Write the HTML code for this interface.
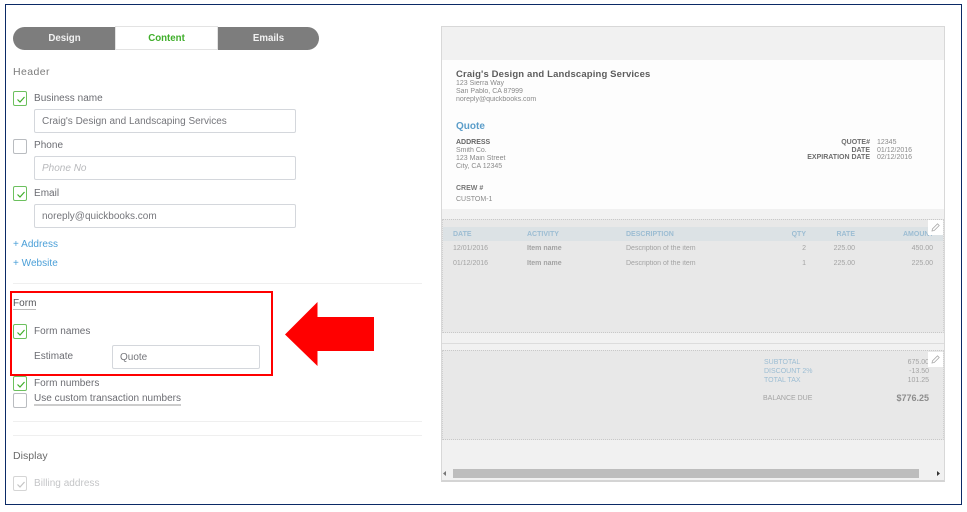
<!DOCTYPE html>
<html><head><meta charset="utf-8"><style>
html,body{margin:0;padding:0;background:#fff}
#p{position:relative;width:967px;height:512px;overflow:hidden;background:#fff;font-family:"Liberation Sans",sans-serif}
#p div{position:absolute;box-sizing:border-box;white-space:nowrap}
.l{font-size:10px;color:#6b6c72;line-height:14px;letter-spacing:.03px;filter:blur(.3px)}
.cb{left:13px;width:14px;height:15px;border:1px solid #b9bcc0;border-radius:2px;background:#fff}
.cb.on{border-color:#6cc05e}
.cb svg{position:absolute;left:2px;top:3px}
.in{left:34px;width:262px;height:24px;border:1px solid #d4d7dc;border-radius:2px;background:#fff;font-size:10px;color:#75767b;line-height:23px;padding-left:7px}
.hr{left:13px;width:409px;height:1px;background:#efefef}
.t{font-size:7px;color:#8a8a8a;line-height:8px;filter:blur(.35px)}
.b{font-size:7px;color:#9cbdd3;font-weight:bold;line-height:8px;filter:blur(.35px)}
.g{font-size:7px;color:#a3a3a3;line-height:8px;filter:blur(.35px)}
.r{text-align:right}
.dash{left:442px;width:502px;background:#e8e8e8;border-top:1px dotted #c8c8c8;border-bottom:1px dotted #c8c8c8;border-left:1px dotted #d0d0d0;border-right:1px dotted #d0d0d0}
.pen{left:928px;width:15px;height:15px;background:#fff}
.pen svg{position:absolute;left:2px;top:2px}
.tab{top:27px;height:23px;background:#7d7d7d;color:#f2f2f2;font-size:9.7px;font-weight:bold;text-align:center;line-height:23px;filter:blur(.25px)}
</style></head><body><div id="p">
<div style="left:5px;top:4px;width:957px;height:501px;border:1px solid #0b2a66"></div>

<div class="tab" style="left:13px;width:102px;border-radius:12px 0 0 12px;padding-left:1px">Design</div>
<div class="tab" style="left:218px;width:101px;border-radius:0 12px 12px 0">Emails</div>
<div class="tab" style="left:115px;top:26px;width:103px;height:24px;background:#fff;border:1px solid #e3e3e3;color:#3fae2a">Content</div>

<div class="l" style="left:13px;top:65px;font-size:10.5px;color:#7b7b7b;letter-spacing:.4px">Header</div>

<div class="cb on" style="top:91px"><svg width="10" height="9" viewBox="0 0 10 9"><path d="M1.5 4.5L4 7L8.5 2" fill="none" stroke="#3fae2a" stroke-width="1.2"/></svg></div>
<div class="l" style="left:34px;top:92px">Business name</div>
<div class="in" style="top:109px">Craig's Design and Landscaping Services</div>

<div class="cb" style="top:139px"></div>
<div class="l" style="left:34px;top:139px">Phone</div>
<div class="in" style="top:156px;color:#b8b9bc;font-style:italic">Phone No</div>

<div class="cb on" style="top:186px"><svg width="10" height="9" viewBox="0 0 10 9"><path d="M1.5 4.5L4 7L8.5 2" fill="none" stroke="#3fae2a" stroke-width="1.2"/></svg></div>
<div class="l" style="left:34px;top:187px">Email</div>
<div class="in" style="top:204px">noreply@quickbooks.com</div>

<div class="l" style="left:13px;top:238px;color:#4a9fd8">+ Address</div>
<div class="l" style="left:13px;top:257px;color:#4a9fd8">+ Website</div>

<div class="hr" style="top:283px"></div>

<div class="l" style="left:13px;top:299px;color:#55565a;border-bottom:1px solid #bcbcbc;line-height:10px">Form</div>
<div class="cb on" style="top:324px"><svg width="10" height="9" viewBox="0 0 10 9"><path d="M1.5 4.5L4 7L8.5 2" fill="none" stroke="#3fae2a" stroke-width="1.2"/></svg></div>
<div class="l" style="left:34px;top:325px">Form names</div>
<div class="l" style="left:34px;top:350px">Estimate</div>
<div class="in" style="left:112px;top:345px;width:148px">Quote</div>

<div style="left:10px;top:291px;width:263px;height:85px;border:2px solid #f00"></div>
<svg style="position:absolute;left:0;top:0" width="967" height="512"><polygon points="285,334.500 317.500,302 317.500,317 374,317 374,351 317.500,351 317.500,366" fill="#f00"/></svg>

<div class="cb on" style="top:376px"><svg width="10" height="9" viewBox="0 0 10 9"><path d="M1.5 4.5L4 7L8.500 2" fill="none" stroke="#3fae2a" stroke-width="1.2"/></svg></div>
<div class="l" style="left:34px;top:377px">Form numbers</div>
<div class="cb" style="top:393px"></div>
<div class="l" style="left:34px;top:394px;border-bottom:2px solid #ccc;line-height:10px;height:12px">Use custom transaction numbers</div>

<div class="hr" style="top:421px"></div>
<div class="hr" style="top:435px"></div>

<div class="l" style="left:13px;top:449px;color:#6a6a6a;font-size:10.5px">Display</div>
<div class="cb" style="top:476px;border-color:#d5d5d5"><svg width="10" height="9" viewBox="0 0 10 9"><path d="M1.500 4.500L4 7L8.500 2" fill="none" stroke="#c4c4c4" stroke-width="1.200"/></svg></div>
<div class="l" style="left:34px;top:477px;color:#c4c5c7">Billing address</div>

<!-- preview -->
<div style="left:441px;top:26px;width:504px;height:456px;background:#f1f1f1;border:1px solid #d8d8d8;border-bottom:2px solid #d4d4d4"></div>
<div style="left:442px;top:60px;width:502px;height:149px;background:#fdfdfd"></div>

<div class="t" style="left:456px;top:69px;font-size:9.5px;line-height:11px;font-weight:bold;color:#5c5c5c;letter-spacing:.15px">Craig's Design and Landscaping Services</div>
<div class="t" style="left:456px;top:80px">123 Sierra Way</div>
<div class="t" style="left:456px;top:88px">San Pablo, CA 87999</div>
<div class="t" style="left:456px;top:96px">noreply@quickbooks.com</div>
<div class="t" style="left:456px;top:121px;font-size:10px;line-height:12px;font-weight:bold;color:#5b9dc9">Quote</div>
<div class="t" style="left:456px;top:139px;font-weight:bold;color:#666">ADDRESS</div>
<div class="t" style="left:456px;top:147px">Smith Co.</div>
<div class="t" style="left:456px;top:155px">123 Main Street</div>
<div class="t" style="left:456px;top:163px">City, CA 12345</div>
<div class="t" style="left:456px;top:185px;font-weight:bold;color:#777">CREW #</div>
<div class="t" style="left:456px;top:196px">CUSTOM-1</div>

<div class="t r" style="left:770px;width:100px;top:139px;font-weight:bold;color:#6e6e6e">QUOTE#</div>
<div class="t r" style="left:770px;width:100px;top:147px;font-weight:bold;color:#6e6e6e">DATE</div>
<div class="t r" style="left:770px;width:100px;top:154px;font-weight:bold;color:#6e6e6e">EXPIRATION DATE</div>
<div class="t" style="left:877px;top:139px">12345</div>
<div class="t" style="left:877px;top:147px">01/12/2016</div>
<div class="t" style="left:877px;top:154px">02/12/2016</div>

<div class="dash" style="top:219px;height:114px"></div>
<div style="left:443px;top:227px;width:500px;height:14px;background:#dce2e5"></div>
<div class="b" style="left:453px;top:231px">DATE</div>
<div class="b" style="left:527px;top:231px">ACTIVITY</div>
<div class="b" style="left:626px;top:231px">DESCRIPTION</div>
<div class="b r" style="left:770px;width:36px;top:231px">QTY</div>
<div class="b r" style="left:815px;width:40px;top:231px">RATE</div>
<div class="b" style="left:903px;width:29px;top:231px;overflow:hidden">AMOUNT</div>

<div class="g" style="left:453px;top:245px">12/01/2016</div>
<div class="g" style="left:527px;top:245px;font-weight:bold">Item name</div>
<div class="g" style="left:626px;top:245px">Description of the item</div>
<div class="g r" style="left:770px;width:36px;top:245px">2</div>
<div class="g r" style="left:815px;width:40px;top:245px">225.00</div>
<div class="g r" style="left:893px;width:40px;top:245px">450.00</div>

<div class="g" style="left:453px;top:260px">01/12/2016</div>
<div class="g" style="left:527px;top:260px;font-weight:bold">Item name</div>
<div class="g" style="left:626px;top:260px">Description of the item</div>
<div class="g r" style="left:770px;width:36px;top:260px">1</div>
<div class="g r" style="left:815px;width:40px;top:260px">225.00</div>
<div class="g r" style="left:893px;width:40px;top:260px">225.00</div>

<div style="left:442px;top:343px;width:502px;height:1px;background:#dcdcdc"></div>
<div class="dash" style="top:350px;height:90px"></div>
<div class="b" style="left:764px;top:359px;font-weight:normal">SUBTOTAL</div>
<div class="b" style="left:764px;top:368px;font-weight:normal">DISCOUNT 2%</div>
<div class="b" style="left:764px;top:377px;font-weight:normal">TOTAL TAX</div>
<div class="g" style="left:763px;top:395px">BALANCE DUE</div>
<div class="g r" style="left:889px;width:40px;top:359px">675.00</div>
<div class="g r" style="left:889px;width:40px;top:368px">-13.50</div>
<div class="g r" style="left:889px;width:40px;top:377px">101.25</div>
<div class="g r" style="left:869px;width:60px;top:393px;font-size:9px;line-height:10px;font-weight:bold;color:#8d8d8d">$776.25</div>

<div class="pen" style="top:220px"><svg width="11" height="11" viewBox="0 0 11 11"><path d="M2 9L2.500 6.800L7.500 1.800L9.200 3.500L4.200 8.500Z" fill="none" stroke="#a9a9a9" stroke-width=".8"/></svg></div>
<div class="pen" style="top:352px"><svg width="11" height="11" viewBox="0 0 11 11"><path d="M2 9L2.500 6.800L7.500 1.800L9.200 3.500L4.200 8.500Z" fill="none" stroke="#a9a9a9" stroke-width=".8"/></svg></div>

<div style="left:453px;top:469px;width:466px;height:9px;background:#bdbdbd"></div>
<svg style="position:absolute;left:0;top:0" width="967" height="512"><path d="M446 471L446 476L443 473.500Z" fill="#777"/><path d="M937 471L937 476L940 473.500Z" fill="#333"/></svg>
</div></body></html>
